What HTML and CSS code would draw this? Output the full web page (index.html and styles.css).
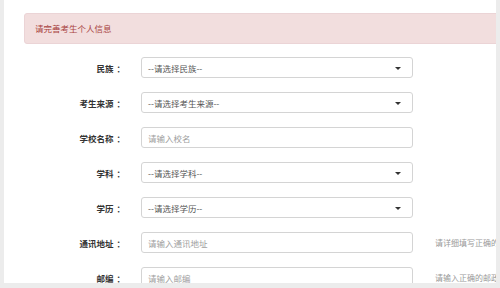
FILE: index.html
```html
<!DOCTYPE html>
<html lang="zh-CN">
<head>
<meta charset="utf-8">
<link rel="stylesheet" href="styles.css">
</head>
<body>
<div class="panel">
  <div class="alert">请完善考生个人信息</div>
  <div class="form">
    <div class="row">
      <div class="label">民族<span class="colon">：</span></div>
      <div class="control select">--请选择民族--<span class="caret"></span></div>
    </div>
    <div class="row">
      <div class="label">考生来源<span class="colon">：</span></div>
      <div class="control select">--请选择考生来源--<span class="caret"></span></div>
    </div>
    <div class="row">
      <div class="label">学校名称<span class="colon">：</span></div>
      <div class="control input">请输入校名</div>
    </div>
    <div class="row">
      <div class="label">学科<span class="colon">：</span></div>
      <div class="control select">--请选择学科--<span class="caret"></span></div>
    </div>
    <div class="row">
      <div class="label">学历<span class="colon">：</span></div>
      <div class="control select">--请选择学历--<span class="caret"></span></div>
    </div>
    <div class="row">
      <div class="label">通讯地址<span class="colon">：</span></div>
      <div class="control input">请输入通讯地址</div>
      <div class="help">请详细填写正确的通讯地址</div>
    </div>
    <div class="row">
      <div class="label">邮编<span class="colon">：</span></div>
      <div class="control input">请输入邮编</div>
      <div class="help">请输入正确的邮政编码</div>
    </div>
  </div>
</div>
</body>
</html>
```
FILE: styles.css
```css
html, body {
  margin: 0;
  padding: 0;
  height: 100%;
  background: #ececec;
  overflow: hidden;
}
body {
  font-family: "Noto Sans CJK SC", "Noto Sans", sans-serif;
  font-size: 8.5px;
}
.panel {
  margin-left: 4px;
  width: 492px;
  height: 283px;
  background: #fff;
  overflow: hidden;
  box-sizing: border-box;
  padding: 13px 0 0 20px;
}
.alert {
  height: 31px;
  box-sizing: border-box;
  margin-right: -6px;
  background: #f2dede;
  border: 1px solid #ebd4d6;
  border-radius: 3px;
  color: #a94442;
  display: flex;
  align-items: center;
  padding-left: 10px;
  line-height: 1;
}
.form {
  display: flex;
  flex-direction: column;
  gap: 14px;
  margin-top: 13px;
}
.row {
  display: flex;
  align-items: center;
  height: 21px;
}
.label {
  width: 99px;
  flex-shrink: 0;
  text-align: right;
  font-weight: bold;
  color: #333;
  white-space: nowrap;
}
.colon {
  display: inline-block;
  padding-left: 3px;
  margin-right: -2px;
}
.control {
  margin-left: 18px;
  width: 272px;
  height: 21px;
  box-sizing: border-box;
  border: 1px solid #d4d4d4;
  border-radius: 3px;
  display: flex;
  align-items: center;
  padding-left: 6px;
  position: relative;
  white-space: nowrap;
  flex-shrink: 0;
}
.select {
  color: #555;
}
.input {
  color: #a0a0a0;
}
.caret {
  position: absolute;
  right: 11px;
  top: 9px;
  width: 0;
  height: 0;
  border-left: 3px solid transparent;
  border-right: 3px solid transparent;
  border-top: 3px solid #333;
}
.help {
  margin-left: 22px;
  flex-shrink: 0;
  color: #999;
  font-size: 8px;
  white-space: nowrap;
}
```
